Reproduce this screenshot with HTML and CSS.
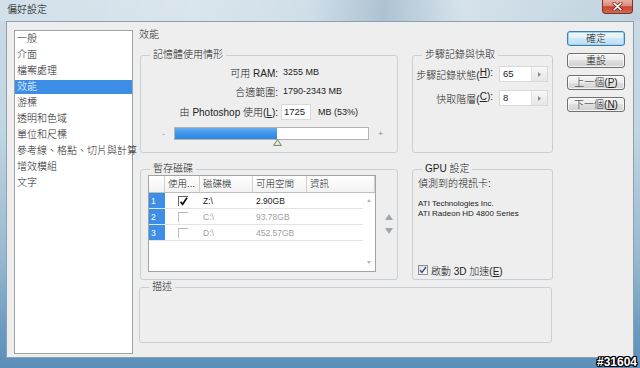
FILE: index.html
```html
<!DOCTYPE html>
<html lang="zh-Hant">
<head>
<meta charset="utf-8">
<title>偏好設定</title>
<link rel="stylesheet" href="styles.css">
</head>
<body>
<div class="window">
  <div class="titlebar">
    <span class="title">偏好設定</span>
    <div class="close"><svg width="11" height="9" viewBox="0 0 11 9"><path d="M2 1.2 L9 7.8 M9 1.2 L2 7.8" stroke="#5a1c18" stroke-width="3" stroke-linecap="round"/><path d="M2 1.2 L9 7.8 M9 1.2 L2 7.8" stroke="#fff" stroke-width="1.6" stroke-linecap="round"/></svg></div>
  </div>
  <div class="client">
    <ul class="cats">
      <li>一般</li>
      <li>介面</li>
      <li>檔案處理</li>
      <li class="sel">效能</li>
      <li>游標</li>
      <li>透明和色域</li>
      <li>單位和尺標</li>
      <li>參考線、格點、切片與計算</li>
      <li>增效模組</li>
      <li>文字</li>
    </ul>
    <div class="main">
      <div class="heading">效能</div>
      <div class="groups">
        <fieldset class="grp mem">
          <legend>記憶體使用情形</legend>
          <div class="mrow r1"><span class="lbl">可用 RAM:</span><span class="val">3255 MB</span></div>
          <div class="mrow r2"><span class="lbl">合適範圍:</span><span class="val">1790-2343 MB</span></div>
          <div class="mrow r3"><span class="lbl">由 Photoshop 使用(<u>L</u>):</span><span class="field">1725</span><span class="pct">MB (53%)</span></div>
          <div class="slider">
            <span class="minus">-</span>
            <div class="track">
              <div class="fill" style="width:53%"></div>
              <svg class="thumb" style="left:53%" width="9" height="7" viewBox="0 0 9 7"><path d="M4.5 0.6 L8.4 6.4 L0.6 6.4 Z" fill="#dff2cf" stroke="#6f7f6c" stroke-width="1"/></svg>
            </div>
            <span class="plus">+</span>
          </div>
        </fieldset>
        <fieldset class="grp hist">
          <legend>步驟記錄與快取</legend>
          <div class="hrow"><span class="hlbl">步驟記錄狀態(<u>H</u>):</span><span class="spin"><span class="num">65</span><span class="arr"><svg width="3" height="5" viewBox="0 0 3 5"><path d="M0 0 L3 2.5 L0 5 Z" fill="#8a8a8a"/></svg></span></span></div>
          <div class="hrow"><span class="hlbl">快取階層(<u>C</u>):</span><span class="spin"><span class="num">8</span><span class="arr"><svg width="3" height="5" viewBox="0 0 3 5"><path d="M0 0 L3 2.5 L0 5 Z" fill="#8a8a8a"/></svg></span></span></div>
        </fieldset>
        <fieldset class="grp scratch">
          <legend>暫存磁碟</legend>
          <div class="srow">
            <div class="disks">
              <div class="dhead">
                <span class="c0"></span><span class="c1">使用...</span><span class="c2">磁碟機</span><span class="c3">可用空間</span><span class="c4">資訊</span>
              </div>
              <div class="dbody">
                <div class="drows">
                  <div class="drow"><span class="c0">1</span><span class="c1"><i class="tcb on"><svg width="9" height="9" viewBox="0 0 9 9"><path d="M1.5 4.8 L3.6 7.3 L8 0.8" fill="none" stroke="#111" stroke-width="1.7"/></svg></i></span><span class="c2">Z:\</span><span class="c3">2.90GB</span><span class="c4"></span></div>
                  <div class="drow off"><span class="c0">2</span><span class="c1"><i class="tcb"></i></span><span class="c2">C:\</span><span class="c3">93.78GB</span><span class="c4"></span></div>
                  <div class="drow off"><span class="c0">3</span><span class="c1"><i class="tcb"></i></span><span class="c2">D:\</span><span class="c3">452.57GB</span><span class="c4"></span></div>
                </div>
                <div class="vscroll"><i class="sup"></i><i class="sdown"></i></div>
              </div>
            </div>
            <div class="order"><i class="oup"></i><i class="odown"></i></div>
          </div>
        </fieldset>
        <fieldset class="grp gpu">
          <legend>GPU 設定</legend>
          <div class="gpu-body">
            <div class="detect">偵測到的視訊卡:</div>
            <div class="card">ATI Technologies Inc.<br>ATI Radeon HD 4800 Series</div>
            <div class="gcheck"><i class="vcb"><svg width="8" height="8" viewBox="0 0 8 8"><path d="M1 4.2 L3 6.5 L7 1" fill="none" stroke="#3b4f8c" stroke-width="1.4"/></svg></i><span>啟動 3D 加速(<u>E</u>)</span></div>
          </div>
        </fieldset>
      </div>
      <fieldset class="grp desc">
        <legend>描述</legend>
      </fieldset>
    </div>
    <div class="buttons">
      <div class="btn default">確定</div>
      <div class="btn">重設</div>
      <div class="btn">上一個(<u>P</u>)</div>
      <div class="btn">下一個(<u>N</u>)</div>
    </div>
  </div>
  <div class="wm">#31604</div>
</div>
</body>
</html>
```

FILE: styles.css
```css
* { box-sizing: border-box; }
html, body { margin: 0; padding: 0; }
body {
  width: 640px;
  height: 368px;
  overflow: hidden;
  font-family: "Liberation Sans", "Noto Sans CJK TC", sans-serif;
  font-size: 10px;
  font-weight: 300;
  color: #222;
  background: #6f9cbf;
}
u { text-decoration: underline; text-underline-offset: 1px; }

.window {
  position: relative;
  width: 640px;
  height: 368px;
  display: flex;
  flex-direction: column;
  padding: 0 6px 10px;
  background: linear-gradient(180deg, #cbdbe6 0%, #c2d5e2 35%, #98b9cf 70%, #6a9ac0 90%, #5b8fb9 100%);
}

.titlebar {
  height: 21px;
  margin: 0 -6px;
  padding: 0 7px;
  display: flex;
  align-items: flex-start;
  justify-content: space-between;
  background: linear-gradient(90deg, rgba(255,255,255,0.15) 0%, rgba(255,255,255,0.3) 30%, rgba(255,255,255,0.1) 48%, rgba(70,110,140,0.22) 60%, rgba(255,255,255,0.2) 72%, rgba(120,150,170,0.12) 100%);
}
.title { line-height: 20px; color: #000; }
.close {
  width: 31px;
  height: 14px;
  border: 1px solid #7a3128;
  border-top: 0;
  border-radius: 0 0 4px 4px;
  background: linear-gradient(180deg, #eab0a2 0%, #dc8a78 45%, #c5452f 52%, #d26a52 100%);
  display: flex;
  align-items: center;
  justify-content: center;
}

.client {
  flex: 1;
  display: flex;
  background: #eeeeee;
  border: 1px solid #8b9fae;
  padding: 8px 7px 3px 7px;
}

.cats {
  width: 119px;
  margin: 0;
  padding: 0;
  list-style: none;
  background: #fff;
  border: 1px solid #9ea3a8;
}
.cats li {
  height: 16px;
  line-height: 16px;
  padding-left: 2px;
  white-space: nowrap;
}
.cats li.sel {
  color: #fff;
  background: linear-gradient(180deg, transparent 1px, #3c8ee6 1px, #3c8ee6 15px, transparent 15px);
}

.main {
  width: 413px;
  margin-left: 6px;
  display: flex;
  flex-direction: column;
}
.heading { height: 12px; line-height: 12px; margin-top: -1px; }

.groups {
  display: grid;
  grid-template-columns: 258px 141px;
  grid-template-rows: 105px 118px;
  column-gap: 14px;
  row-gap: 9px;
  margin-top: 7px;
  margin-left: 1px;
}

fieldset.grp {
  margin: 0;
  padding: 2px 0 0;
  border: 1px solid #c9cfd4;
  border-radius: 3px;
  min-width: 0;
}
fieldset.grp legend {
  padding: 0 3px;
  margin-left: 9px;
  line-height: 14px;
}

/* memory */
.mrow { display: flex; align-items: center; white-space: nowrap; }
.lbl { width: 137px; text-align: right; }
.val { margin-left: 5px; font-size: 9px; }
.r1 { height: 16px; }
.r2 { height: 16px; margin-top: 3px; }
.r3 { height: 17px; margin-top: 4px; }
.field {
  margin-left: 3px;
  width: 30px;
  height: 16px;
  line-height: 14px;
  padding-left: 2px;
  background: #fff;
  border: 1px solid #dadada;
  font-size: 9.5px;
}
.pct { margin-left: 7px; font-size: 9px; }

.slider {
  display: flex;
  align-items: center;
  height: 13px;
  margin-top: 7px;
  padding-left: 19px;
}
.minus, .plus {
  width: 7px;
  text-align: center;
  font-size: 8px;
  color: #7a7a7a;
  line-height: 13px;
}
.track {
  position: relative;
  width: 195px;
  height: 13px;
  margin-left: 7px;
  border: 1px solid #b3b3b3;
  background: #fff;
}
.fill {
  height: 100%;
  background: linear-gradient(180deg, #62aef3 0%, #3f93e8 50%, #2f86e0 100%);
}
.thumb {
  position: absolute;
  top: 100%;
  margin-left: -4px;
  display: block;
}
.plus { margin-left: 8px; }

/* history */
.hrow {
  display: flex;
  align-items: center;
  height: 16px;
  padding-left: 5px;
  white-space: nowrap;
}
.hrow:first-of-type { margin-top: 2px; }
.hrow + .hrow { margin-top: 8px; }
.hlbl { width: 75px; text-align: right; display: flex; justify-content: flex-end; }
.spin {
  margin-left: 6px;
  width: 49px;
  height: 16px;
  display: flex;
  background: #fff;
  border: 1px solid #d8d8d8;
}
.num { flex: 1; padding-left: 3px; line-height: 14px; font-size: 9.5px; }
.arr {
  width: 16px;
  display: flex;
  align-items: center;
  justify-content: center;
  background: linear-gradient(180deg, #f7f7f7, #e6e6e6);
  border-left: 1px solid #e2e2e2;
}

/* scratch disks */
.scratch { padding-top: 0 !important; }
.srow {
  display: flex;
  align-items: center;
  margin-top: -1px;
  padding-left: 7px;
}
.disks {
  width: 228px;
  height: 97px;
  border: 1px solid #a3a3a3;
  background: #fff;
  display: flex;
  flex-direction: column;
}
.dhead {
  display: flex;
  height: 17px;
  border-bottom: 1px solid #bdbdbd;
  background: linear-gradient(180deg, #ffffff, #f2f2f2);
  font-size: 9.5px;
}
.dhead span {
  border-right: 1px solid #cfcfcf;
  padding-left: 3px;
  line-height: 16px;
  white-space: nowrap;
}
.c0 { width: 16px; }
.c1 { width: 35px; }
.c2 { width: 53px; }
.c3 { width: 54px; }
.c4 { flex: 1; }
.dbody { flex: 1; display: flex; }
.drows { flex: 1; }
.drow {
  display: flex;
  height: 16px;
  border-bottom: 1px solid #e4e4e4;
  font-size: 8.5px;
}
.drow span { display: flex; align-items: center; padding-left: 3px; }
.drow .c0 {
  padding-left: 2px;
  background: #3c8ee6;
  color: #fff;
}
.drow .c1 { justify-content: center; padding-left: 0; }
.drow.off { color: #a0a0a0; }
.tcb {
  display: block;
  width: 10px;
  height: 10px;
  border-top: 1px solid #b8b8b8;
  border-left: 1px solid #b8b8b8;
}
.tcb.on { border-color: #666; }
.tcb svg { display: block; }
.vscroll {
  width: 12px;
  display: flex;
  flex-direction: column;
  justify-content: space-between;
  align-items: center;
  padding: 6px 0 7px;
}
.sup, .sdown {
  display: block;
  width: 0;
  height: 0;
  border-left: 2.5px solid transparent;
  border-right: 2.5px solid transparent;
}
.sup { border-bottom: 3px solid #b5b5b5; }
.sdown { border-top: 3px solid #b5b5b5; }

.order {
  width: 8px;
  margin-left: 9px;
  display: flex;
  flex-direction: column;
  gap: 8px;
}
.oup, .odown {
  display: block;
  width: 0;
  height: 0;
  border-left: 4px solid transparent;
  border-right: 4px solid transparent;
}
.oup { border-bottom: 6px solid #a2a7ab; }
.odown { border-top: 6px solid #a2a7ab; }

/* gpu */
.gpu-body {
  height: 101px;
  display: flex;
  flex-direction: column;
  padding: 0 0 3px 5px;
}
.detect { line-height: 12px; }
.card { margin-top: 9px; font-size: 8px; line-height: 10px; }
.gcheck {
  margin-top: auto;
  height: 12px;
  display: flex;
  align-items: center;
}
.vcb {
  display: flex;
  align-items: center;
  justify-content: center;
  width: 10px;
  height: 10px;
  border: 1px solid #8e8f8f;
  background: linear-gradient(135deg, #d9dde3, #ffffff);
  margin-right: 3px;
}

.desc { margin-top: 7px; margin-left: 1px; height: 63px; }

/* buttons */
.buttons {
  width: 58px;
  margin-left: 15px;
  padding-top: 1px;
  display: flex;
  flex-direction: column;
  gap: 7px;
}
.btn {
  height: 15px;
  line-height: 13px;
  text-align: center;
  white-space: nowrap;
  border: 1px solid #707070;
  border-radius: 3px;
  background: linear-gradient(180deg, #f4f4f4 0%, #ececec 50%, #dfdfdf 50%, #d2d2d2 100%);
  box-shadow: inset 0 0 0 1px rgba(255,255,255,0.7);
}
.btn.default {
  border-color: #3c7fb1;
  background: linear-gradient(180deg, #eef7fc 0%, #e2f1fa 50%, #cfe7f5 50%, #bfdff1 100%);
  box-shadow: inset 0 0 0 1px #9fd4ef;
}

.wm {
  position: absolute;
  right: 3px;
  bottom: 0;
  font: bold 12px/12px "Liberation Sans", sans-serif;
  color: #fff;
  text-shadow: -1px 0 #000, 1px 0 #000, 0 -1px #000, 0 1px #000, 1px 1px #000, -1px -1px #000, 1px -1px #000, -1px 1px #000;
}
```
